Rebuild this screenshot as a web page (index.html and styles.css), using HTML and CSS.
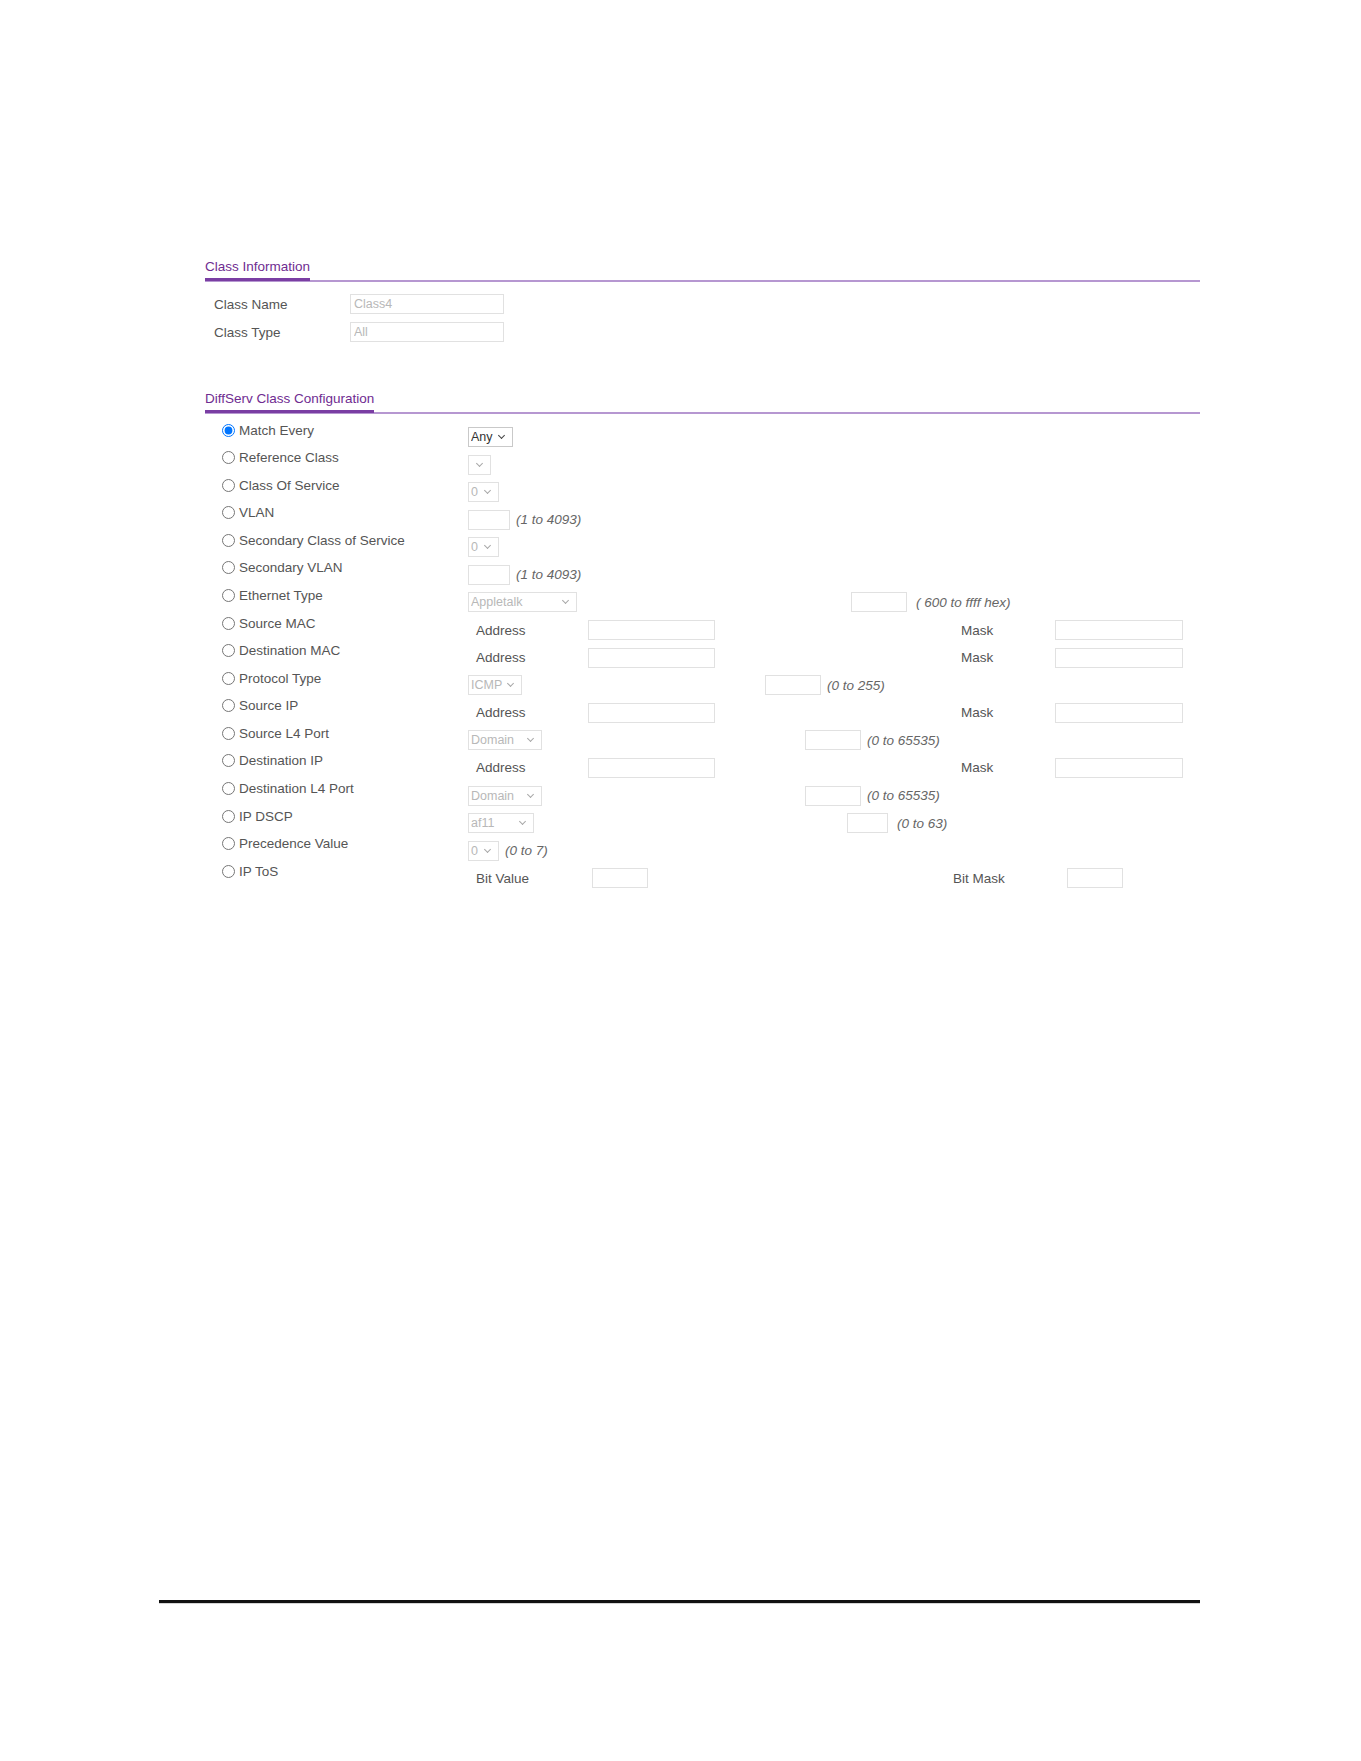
FILE: index.html
```html
<!DOCTYPE html>
<html lang="en">

<head>
    <meta charset="UTF-8">
    <meta name="viewport" content="width=device-width, initial-scale=1.0">
    <title>DiffServ Class Configuration</title>
    <link rel="stylesheet" href="styles.css">
</head>

<body>
    <div class="page">

        <!-- Class Information -->
        <section class="block">
            <h2 class="block-title"><span>Class Information</span></h2>
            <div class="info-rows">
                <div class="info-row">
                    <label for="className">Class Name</label>
                    <input class="field" id="className" type="text" value="Class4" disabled>
                </div>
                <div class="info-row">
                    <label for="classType">Class Type</label>
                    <input class="field" id="classType" type="text" value="All" disabled>
                </div>
            </div>
        </section>

        <!-- DiffServ Class Configuration -->
        <section class="block block-diff">
            <h2 class="block-title"><span>DiffServ Class Configuration</span></h2>
            <div class="match-list">

                <div class="match-row">
                    <label class="opt"><input type="radio" name="match" checked>Match Every</label>
                    <div class="ctl">
                        <span class="sel sel-any active"><select><option>Any</option></select></span>
                    </div>
                </div>

                <div class="match-row">
                    <label class="opt"><input type="radio" name="match">Reference Class</label>
                    <div class="ctl">
                        <span class="sel sel-ref"><select disabled><option></option></select></span>
                    </div>
                </div>

                <div class="match-row">
                    <label class="opt"><input type="radio" name="match">Class Of Service</label>
                    <div class="ctl">
                        <span class="sel sel-num"><select disabled><option>0</option></select></span>
                    </div>
                </div>

                <div class="match-row">
                    <label class="opt"><input type="radio" name="match">VLAN</label>
                    <div class="ctl">
                        <input class="field num" type="text" disabled>
                        <span class="hint">(1 to 4093)</span>
                    </div>
                </div>

                <div class="match-row">
                    <label class="opt"><input type="radio" name="match">Secondary Class of Service</label>
                    <div class="ctl">
                        <span class="sel sel-num"><select disabled><option>0</option></select></span>
                    </div>
                </div>

                <div class="match-row">
                    <label class="opt"><input type="radio" name="match">Secondary VLAN</label>
                    <div class="ctl">
                        <input class="field num" type="text" disabled>
                        <span class="hint">(1 to 4093)</span>
                    </div>
                </div>

                <div class="match-row">
                    <label class="opt"><input type="radio" name="match">Ethernet Type</label>
                    <div class="ctl">
                        <span class="sel sel-eth"><select disabled><option>Appletalk</option></select></span>
                        <input class="field num-wide eth-val" type="text" disabled>
                        <span class="hint hint-far">( 600 to ffff hex)</span>
                    </div>
                </div>

                <div class="match-row">
                    <label class="opt"><input type="radio" name="match">Source MAC</label>
                    <div class="ctl pair">
                        <span class="pair-label">Address</span>
                        <input class="field addr" type="text" disabled>
                        <span>Mask</span>
                        <input class="field mask" type="text" disabled>
                    </div>
                </div>

                <div class="match-row">
                    <label class="opt"><input type="radio" name="match">Destination MAC</label>
                    <div class="ctl pair">
                        <span class="pair-label">Address</span>
                        <input class="field addr" type="text" disabled>
                        <span>Mask</span>
                        <input class="field mask" type="text" disabled>
                    </div>
                </div>

                <div class="match-row">
                    <label class="opt"><input type="radio" name="match">Protocol Type</label>
                    <div class="ctl">
                        <span class="sel sel-proto"><select disabled><option>ICMP</option></select></span>
                        <input class="field num-wide proto-val" type="text" disabled>
                        <span class="hint">(0 to 255)</span>
                    </div>
                </div>

                <div class="match-row">
                    <label class="opt"><input type="radio" name="match">Source IP</label>
                    <div class="ctl pair">
                        <span class="pair-label">Address</span>
                        <input class="field addr" type="text" disabled>
                        <span>Mask</span>
                        <input class="field mask" type="text" disabled>
                    </div>
                </div>

                <div class="match-row">
                    <label class="opt"><input type="radio" name="match">Source L4 Port</label>
                    <div class="ctl">
                        <span class="sel sel-port"><select disabled><option>Domain</option></select></span>
                        <input class="field num-wide port-val" type="text" disabled>
                        <span class="hint">(0 to 65535)</span>
                    </div>
                </div>

                <div class="match-row">
                    <label class="opt"><input type="radio" name="match">Destination IP</label>
                    <div class="ctl pair">
                        <span class="pair-label">Address</span>
                        <input class="field addr" type="text" disabled>
                        <span>Mask</span>
                        <input class="field mask" type="text" disabled>
                    </div>
                </div>

                <div class="match-row">
                    <label class="opt"><input type="radio" name="match">Destination L4 Port</label>
                    <div class="ctl">
                        <span class="sel sel-port"><select disabled><option>Domain</option></select></span>
                        <input class="field num-wide port-val" type="text" disabled>
                        <span class="hint">(0 to 65535)</span>
                    </div>
                </div>

                <div class="match-row">
                    <label class="opt"><input type="radio" name="match">IP DSCP</label>
                    <div class="ctl">
                        <span class="sel sel-dscp"><select disabled><option>af11</option></select></span>
                        <input class="field num-dscp dscp-val" type="text" disabled>
                        <span class="hint hint-far">(0 to 63)</span>
                    </div>
                </div>

                <div class="match-row">
                    <label class="opt"><input type="radio" name="match">Precedence Value</label>
                    <div class="ctl">
                        <span class="sel sel-num"><select disabled><option>0</option></select></span>
                        <span class="hint">(0 to 7)</span>
                    </div>
                </div>

                <div class="match-row">
                    <label class="opt"><input type="radio" name="match">IP ToS</label>
                    <div class="ctl pair tos">
                        <span class="pair-label">Bit Value</span>
                        <input class="field num-wide" type="text" disabled>
                        <span>Bit Mask</span>
                        <input class="field num-wide" type="text" disabled>
                    </div>
                </div>

            </div>
        </section>

        <div class="page-rule"></div>
    </div>
</body>

</html>
```

FILE: styles.css
```css
/* Genel sayfa */
body {
    margin: 0;
    font-family: "Liberation Sans", Arial, sans-serif;
    font-size: 13.5px;
    color: #555;
    background: #fff;
}

.page {
    width: 995px;
    margin-left: 205px;
    padding-top: 259px;
}

/* Bolum basliklari */
.block-title {
    display: flex;
    margin: 0;
    font-size: 13.5px;
    font-weight: normal;
    line-height: 16px;
    color: #6f2c91;
    border-bottom: 2px solid #b697d1;
}

.block-title span {
    padding-bottom: 3px;
    border-bottom: 3px solid #7a3ea3;
    margin-bottom: -1px;
}

.block-diff {
    margin-top: 45px;
}

/* Class Information */
.info-rows {
    margin-top: 8px;
}

.info-row {
    display: grid;
    grid-template-columns: 145px 154px;
    height: 28px;
    align-items: center;
}

.info-row label {
    padding-left: 9px;
}

/* Kutular */
.field {
    height: 20px;
    box-sizing: border-box;
    border: 1px solid #e1e1e1;
    border-radius: 0;
    padding: 0 3px;
    background: #fff;
    font: 12.5px "Liberation Sans", Arial, sans-serif;
    color: #b8b8b8;
    outline: none;
}

.field:disabled {
    background: #fff;
    color: #b8b8b8;
}

.info-row .field {
    width: 154px;
}

/* DiffServ satirlari */
.match-list {
    margin-top: 7px;
}

.match-row {
    display: grid;
    grid-template-columns: 263px 1fr;
    height: 27.58px;
}

.opt {
    display: flex;
    align-items: center;
    height: 18px;
    padding-left: 17px;
    white-space: nowrap;
}

.opt input {
    width: 13px;
    height: 13px;
    margin: 0 4px 0 0;
}

.ctl {
    display: flex;
    align-items: center;
    height: 20px;
    margin-top: 6px;
}

.ctl.pair {
    display: grid;
    grid-template-columns: 120px 373px 94px 128px;
}

.ctl.tos {
    grid-template-columns: 124px 361px 114px 56px;
}

.pair-label {
    padding-left: 8px;
}

.addr {
    width: 127px;
}

.mask {
    width: 128px;
}

.num {
    width: 42px;
}

.num-wide {
    width: 56px;
}

.num-dscp {
    width: 41px;
}

.eth-val {
    margin-left: 274px;
}

.proto-val {
    margin-left: 243px;
}

.port-val {
    margin-left: 263px;
}

.dscp-val {
    margin-left: 313px;
}

.hint {
    font-style: italic;
    color: #666;
    margin-left: 6px;
    white-space: nowrap;
}

.hint-far {
    margin-left: 9px;
}

/* Acilir listeler */
.sel {
    position: relative;
    display: inline-block;
    height: 20px;
}

.sel select {
    appearance: none;
    -webkit-appearance: none;
    width: 100%;
    height: 20px;
    box-sizing: border-box;
    border: 1px solid #e1e1e1;
    border-radius: 0;
    background: #fff;
    padding: 0 2px;
    font: 12.5px "Liberation Sans", Arial, sans-serif;
    color: #b8b8b8;
    opacity: 1;
}

.sel::after {
    content: "";
    position: absolute;
    right: 9px;
    top: 6px;
    width: 4px;
    height: 4px;
    border-right: 1px solid #a8a8a8;
    border-bottom: 1px solid #a8a8a8;
    transform: rotate(45deg);
    pointer-events: none;
}

.sel.active select {
    color: #333;
    border-color: #c9c9c9;
}

.sel.active::after {
    border-color: #444;
}

.sel-any {
    width: 45px;
}

.sel-ref {
    width: 23px;
}

.sel-num {
    width: 31px;
}

.sel-eth {
    width: 109px;
}

.sel-proto {
    width: 54px;
}

.sel-port {
    width: 74px;
}

.sel-dscp {
    width: 66px;
}

/* Alt cizgi */
.page-rule {
    margin: 710px 0 0 -46px;
    width: 1041px;
    border-top: 3px solid #111;
    border-bottom: 1px solid #d5d5d5;
}
```
